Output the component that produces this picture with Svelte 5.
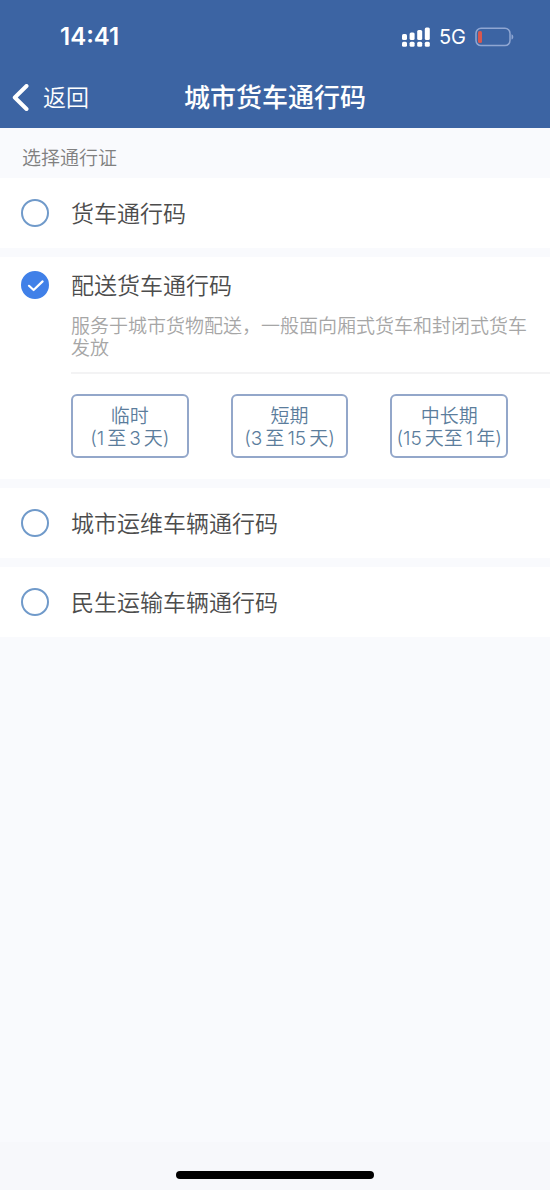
<script>
  let selected = $state('delivery');

  const passes = [
    { id: 'truck', name: '货车通行码' },
    {
      id: 'delivery',
      name: '配送货车通行码',
      desc: '服务于城市货物配送，一般面向厢式货车和封闭式货车发放',
      terms: [
        { name: '临时', parts: ['(1', '至', '3', '天)'] },
        { name: '短期', parts: ['(3', '至', '15', '天)'] },
        { name: '中长期', parts: ['(15', '天至', '1', '年)'] }
      ]
    },
    { id: 'city', name: '城市运维车辆通行码' },
    { id: 'living', name: '民生运输车辆通行码' }
  ];
</script>

<div class="page" lang="zh-CN">
  <header>
    <div class="status">
      <span class="time">14:41</span>
      <div class="signals">
        <svg width="28" height="20" viewBox="0 0 28 20" fill="#fff" aria-hidden="true">
          <rect x="0" y="7" width="5" height="6" rx="1.5" />
          <rect x="7.6" y="5.5" width="5" height="7.5" rx="1.5" />
          <rect x="15.2" y="3" width="5" height="10" rx="1.5" />
          <rect x="22.8" y="0.5" width="5" height="12.5" rx="1.5" />
          <rect x="0" y="14.7" width="5" height="5" rx="1.5" />
          <rect x="7.6" y="14.7" width="5" height="5" rx="1.5" />
          <rect x="15.2" y="14.7" width="5" height="5" rx="1.5" />
          <rect x="22.8" y="14.7" width="5" height="5" rx="1.5" />
        </svg>
        <span class="network">5G</span>
        <svg width="39" height="20" viewBox="0 0 39 20" aria-hidden="true">
          <rect x="1" y="1.2" width="34" height="17.4" rx="5" fill="none" stroke="#8fa6d2" stroke-width="1.5" />
          <rect x="3" y="4" width="4" height="12" rx="1.5" fill="#d8584f" />
          <path d="M36.5 7.2c2.4 1 2.4 4.4 0 5.4z" fill="#8fa6d2" />
        </svg>
      </div>
    </div>
    <nav>
      <button class="back">
        <svg width="18" height="28" viewBox="0 0 18 28" aria-hidden="true">
          <path d="M14.5 2 2.8 13.5l11.7 11.5" fill="none" stroke="#fff" stroke-width="4" stroke-linecap="round" stroke-linejoin="round" />
        </svg>
        返回
      </button>
      <h1>城市货车通行码</h1>
    </nav>
  </header>

  <main>
    <h2 id="pass-label">选择通行证</h2>
    <div class="list" role="radiogroup" aria-labelledby="pass-label">
      {#each passes as pass}
        <section>
          <label>
            <span class="radio">
              <input type="radio" name="pass" value={pass.id} bind:group={selected} />
              {#if selected === pass.id}
                <svg viewBox="0 0 28 28" aria-hidden="true">
                  <path d="M8 14.8l4.6 4.2 9-8.6" fill="none" stroke="#fff" stroke-width="2.2" stroke-linecap="round" stroke-linejoin="round" />
                </svg>
              {/if}
            </span>
            <span class="name">{pass.name}</span>
          </label>
          {#if pass.terms && selected === pass.id}
            <div class="detail">
              <p>{pass.desc}</p>
              <div class="terms">
                {#each pass.terms as term}
                  <button>
                    <span>{term.name}</span>
                    <span class="range">
                      {#each term.parts as part}<span>{part}</span>{/each}
                    </span>
                  </button>
                {/each}
              </div>
            </div>
          {/if}
        </section>
      {/each}
    </div>
  </main>

  <footer><div class="home"></div></footer>
</div>

<style>
  :global(body) {
    margin: 0;
    background: #f9fafd;
  }
  .page {
    display: flex;
    flex-direction: column;
    min-height: 100vh;
    font-family: Inter, 'Noto Sans CJK SC', sans-serif;
    font-weight: 350;
    color: #4c4c4c;
  }
  button {
    padding: 0;
    border: none;
    background: none;
    color: inherit;
    font: inherit;
    cursor: pointer;
  }
  header {
    background: #3c64a3;
    color: #fff;
  }
  .status {
    display: flex;
    justify-content: space-between;
    align-items: center;
    height: 68px;
    padding: 6px 36px 0 60px;
    box-sizing: border-box;
  }
  .time {
    font-size: 24px;
    line-height: 28px;
    font-weight: 600;
  }
  .signals {
    display: flex;
    align-items: center;
    gap: 9px;
  }
  .network {
    font-size: 20px;
    line-height: 24px;
    font-weight: 400;
  }
  nav {
    display: grid;
    grid-template-columns: 1fr auto 1fr;
    align-items: center;
    height: 60px;
    padding: 0 12px;
  }
  .back {
    display: flex;
    align-items: center;
    gap: 13px;
    font-size: 23px;
    line-height: 32px;
  }
  h1 {
    margin: 0;
    font-size: 26px;
    line-height: 32px;
    font-weight: 500;
  }
  h2 {
    margin: 0;
    padding: 20px 22px 8px;
    font-size: 19px;
    line-height: 22px;
    font-weight: 350;
    color: #808080;
  }
  .list {
    display: flex;
    flex-direction: column;
    gap: 9px;
  }
  section {
    background: #fff;
  }
  label {
    display: flex;
    align-items: center;
    gap: 22px;
    padding: 18px 21px;
    font-size: 23px;
    line-height: 32px;
    cursor: pointer;
  }
  .name {
    padding-top: 2px;
  }
  .radio {
    display: grid;
    width: 28px;
    height: 28px;
  }
  .radio > * {
    grid-area: 1 / 1;
  }
  input {
    appearance: none;
    width: 28px;
    height: 28px;
    margin: 0;
    border: 2px solid #709aca;
    border-radius: 50%;
    cursor: pointer;
  }
  input:checked {
    border-color: #4080e8;
    background: #4080e8;
  }
  .radio svg {
    pointer-events: none;
  }
  section:has(.detail) label {
    padding: 11px 21px;
  }
  .detail {
    padding: 0 0 21px 71px;
  }
  p {
    margin: 0;
    padding: 3px 20px 12px 0;
    border-bottom: 2px solid #f3f3f4;
    font-size: 19px;
    line-height: 22px;
    color: #a6a6a6;
  }
  .terms {
    display: grid;
    grid-template-columns: repeat(3, 1fr);
    gap: 42px;
    padding: 20px 42px 0 0;
  }
  .terms button {
    display: flex;
    flex-direction: column;
    align-items: center;
    justify-content: center;
    height: 64px;
    padding-top: 4px;
    border: 2px solid #93a7ca;
    border-radius: 6px;
    font-size: 19px;
    line-height: 22px;
    color: #5b7d9c;
    white-space: nowrap;
  }
  .range {
    display: flex;
    gap: 3px;
  }
  footer {
    margin-top: auto;
    padding: 29px 0 11px;
    background: #f7f8fb;
  }
  .home {
    width: 36%;
    height: 8px;
    margin: 0 auto;
    border-radius: 4px;
    background: #000;
  }
</style>
